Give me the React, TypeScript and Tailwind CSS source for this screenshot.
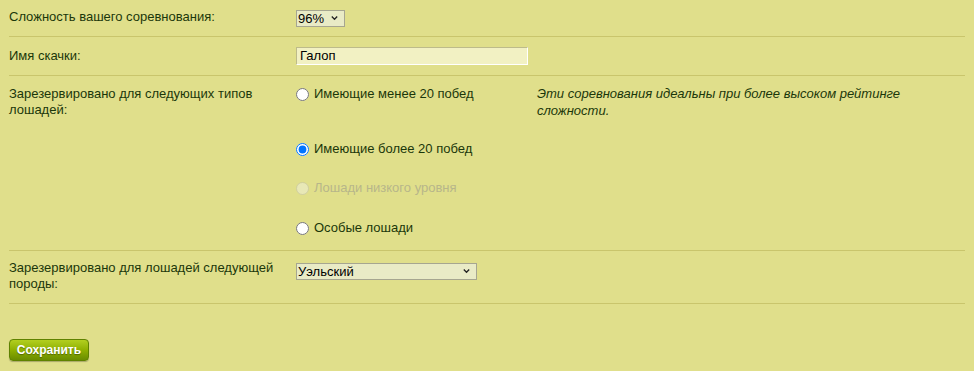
import { useState } from "react";

const Chevron = () => (
  <svg width="7" height="5" viewBox="0 0 7 5" className="absolute right-[7px] top-1/2 -translate-y-1/2 pointer-events-none">
    <path d="M0.8 1 L3.5 3.8 L6.2 1" fill="none" stroke="#222" strokeWidth="1.3" />
  </svg>
);

const App = () => {
  const [level, setLevel] = useState("more");

  return (
    <div
      className="w-[974px] h-[371px] bg-[#e0df8b] text-[13px] text-[#1b370a] overflow-hidden"
      style={{ fontFamily: '"Liberation Sans", Arial, sans-serif' }}
    >
      <div className="ml-[9px] w-[956px]">
        {/* Difficulty */}
        <div className="grid grid-cols-[287px_1fr] border-b border-[#c9c56c] pt-[9px] pb-[10px]">
          <div className="leading-[16px]">Сложность вашего соревнования:</div>
          <div className="relative w-[49px] h-[17px]">
            <select
              defaultValue="96"
              className="appearance-none w-full h-full bg-[#e9ebc6] border border-[#a6a690] pl-[1px] leading-[15px] text-[13px] text-black outline-none"
            >
              <option value="96">96%</option>
            </select>
            <Chevron />
          </div>
        </div>

        {/* Race name */}
        <div className="grid grid-cols-[287px_1fr] items-center border-b border-[#c9c56c] py-[10px]">
          <div className="leading-[16px]">Имя скачки:</div>
          <input
            type="text"
            defaultValue="Галоп"
            className="w-[232px] h-[18px] bg-[#f2f1c3] border border-t-[#bdbb8a] border-l-[#bdbb8a] border-r-white border-b-white px-[3px] text-[13px] text-black outline-none"
          />
        </div>

        {/* Horse types */}
        <div className="grid grid-cols-[287px_241px_1fr] border-b border-[#c9c56c] pt-[10px] pb-[14px]">
          <div className="leading-[16px] pr-2">Зарезервировано для следующих типов лошадей:</div>
          <div className="flex flex-col">
            <label className="flex items-center h-[16px] mb-[39px]">
              <input type="radio" name="lvl" checked={level === "less"} onChange={() => setLevel("less")} className="w-[13px] h-[13px] m-0 mr-[5px]" />
              Имеющие менее 20 побед
            </label>
            <label className="flex items-center h-[16px] mb-[23px]">
              <input type="radio" name="lvl" checked={level === "more"} onChange={() => setLevel("more")} className="w-[13px] h-[13px] m-0 mr-[5px]" />
              Имеющие более 20 побед
            </label>
            <label className="flex items-center h-[16px] mb-[24px] text-[#b7b68a]">
              <input type="radio" name="lvl" disabled className="w-[13px] h-[13px] m-0 mr-[5px] opacity-60" />
              Лошади низкого уровня
            </label>
            <label className="flex items-center h-[16px]">
              <input type="radio" name="lvl" checked={level === "special"} onChange={() => setLevel("special")} className="w-[13px] h-[13px] m-0 mr-[5px]" />
              Особые лошади
            </label>
          </div>
          <div className="italic leading-[17px] w-[390px] -mt-[1px]">
            Эти соревнования идеальны при более высоком рейтинге сложности.
          </div>
        </div>

        {/* Breed */}
        <div className="grid grid-cols-[287px_1fr] border-b border-[#c9c56c] pt-[9px] pb-[11px]">
          <div className="leading-[16px] pr-2">Зарезервировано для лошадей следующей породы:</div>
          <div className="relative w-[181px] h-[17px] mt-[2px]">
            <select
              defaultValue="welsh"
              className="appearance-none w-full h-full bg-[#e9ebc6] border border-[#a6a690] pl-[1px] leading-[15px] text-[13px] text-black outline-none"
            >
              <option value="welsh">Уэльский</option>
            </select>
            <Chevron />
          </div>
        </div>

        <div className="pt-[35px]">
          <button className="w-[80px] h-[22px] rounded-[4px] border border-[#5f8200] bg-gradient-to-b from-[#b2cf1f] via-[#8fb000] to-[#6a8c00] text-white font-bold text-[12px] leading-[20px] shadow-[0_1px_1px_rgba(0,0,0,0.25)] [text-shadow:0_1px_1px_rgba(0,0,0,0.35)]">
            Сохранить
          </button>
        </div>
      </div>
    </div>
  );
};

export default App;
